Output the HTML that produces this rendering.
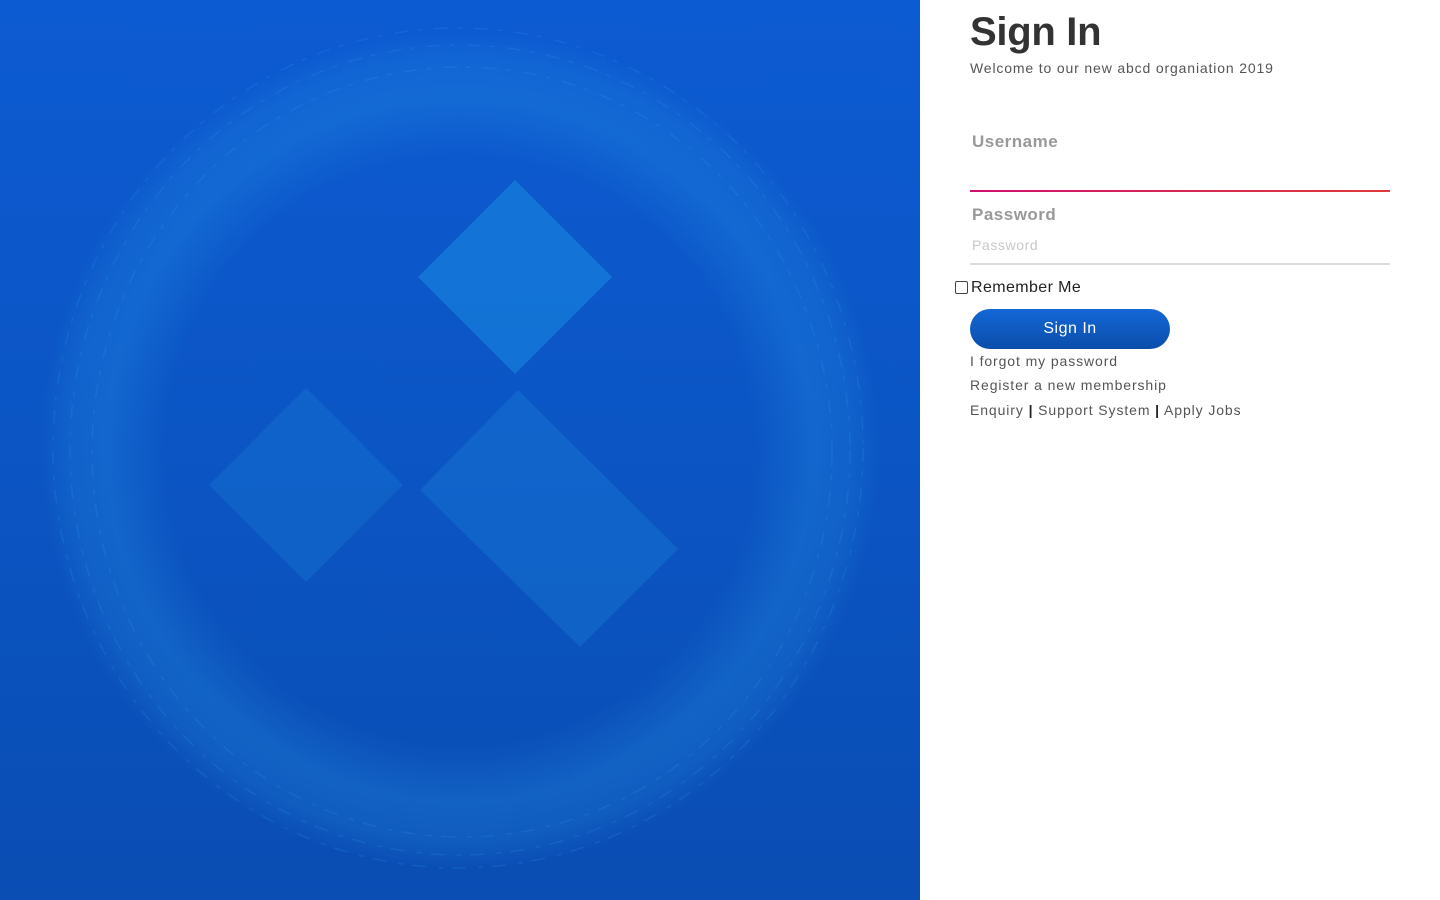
<!DOCTYPE html>
<html><head><style>
html,body{margin:0;padding:0;width:1440px;height:900px;overflow:hidden;font-family:"Liberation Sans",sans-serif;background:#fff}
.left{position:absolute;left:0;top:0;width:920px;height:900px;background:linear-gradient(180deg,#0d5bd2 0%,#0b55c4 50%,#0a4db3 100%)}
.right{position:absolute;left:920px;top:0;width:520px;height:900px}
h1{position:absolute;left:50px;top:10px;margin:0;font-size:40px;font-weight:bold;color:#333;letter-spacing:-0.3px}
.sub{position:absolute;left:50px;top:60px;font-size:14px;color:#555;letter-spacing:0.85px}
.lbl{position:absolute;left:52px;font-size:17px;font-weight:bold;color:#999;letter-spacing:0.5px}
.line{position:absolute;left:50px;width:420px}
.ph{position:absolute;left:52px;top:237px;font-size:14px;color:#c8c8c8;letter-spacing:0.6px}
.cb{position:absolute;left:35px;top:281px;width:11px;height:11px;border:1px solid #444;border-radius:2px}
.rm{position:absolute;left:51px;top:279px;font-size:16px;color:#222;letter-spacing:0.4px}
.btn{position:absolute;left:50px;top:309px;width:200px;height:40px;border-radius:20px;background:linear-gradient(180deg,#1467d6,#0b4eab);color:#fff;font-size:16px;text-align:center;line-height:40px;letter-spacing:0.5px}
.lk{position:absolute;left:50px;font-size:14px;color:#555;letter-spacing:0.9px}
</style></head><body>
<div class="left">
<svg width="920" height="900" style="position:absolute;left:0;top:0">
<defs>
<radialGradient id="g" cx="460" cy="450" r="420" gradientUnits="userSpaceOnUse">
<stop offset="0.7" stop-color="#2a9be8" stop-opacity="0"/>
<stop offset="0.84" stop-color="#2a9be8" stop-opacity="0.25"/>
<stop offset="0.93" stop-color="#2a9be8" stop-opacity="0.18"/>
<stop offset="1" stop-color="#2a9be8" stop-opacity="0"/>
</radialGradient>
</defs>
<ellipse cx="460" cy="450" rx="420" ry="430" fill="url(#g)"/>
<g stroke="#3aa0f0" stroke-opacity="0.18" fill="none" stroke-width="1.5" stroke-dasharray="14 9 5 12">
<ellipse cx="460" cy="450" rx="390" ry="405"/>
<ellipse cx="462" cy="452" rx="370" ry="385"/>
<ellipse cx="458" cy="448" rx="405" ry="420"/>
</g>
<polygon points="515,180 612,277 515,374 418,277" fill="#1a8ae0" opacity="0.55"/>
<polygon points="306,388 403,485 306,582 209,485" fill="#1a80d8" opacity="0.3"/>
<polygon points="420,490 518,390 678,549 580,647" fill="#1a80d8" opacity="0.35"/>
</svg>
</div>
<div class="right">
<h1>Sign In</h1>
<div class="sub">Welcome to our new abcd organiation 2019</div>
<div class="lbl" style="top:132px">Username</div>
<div class="line" style="top:190px;height:2px;background:linear-gradient(90deg,#d0106e,#e03a3a)"></div>
<div class="lbl" style="top:205px">Password</div>
<div class="ph">Password</div>
<div class="line" style="top:263px;height:2px;background:#ddd"></div>
<div class="cb"></div>
<div class="rm">Remember Me</div>
<div class="btn">Sign In</div>
<div class="lk" style="top:353px">I forgot my password</div>
<div class="lk" style="top:377px">Register a new membership</div>
<div class="lk" style="top:402px">Enquiry <b style="color:#222">|</b> Support System <b style="color:#222">|</b> Apply Jobs</div>
</div>
</body></html>
